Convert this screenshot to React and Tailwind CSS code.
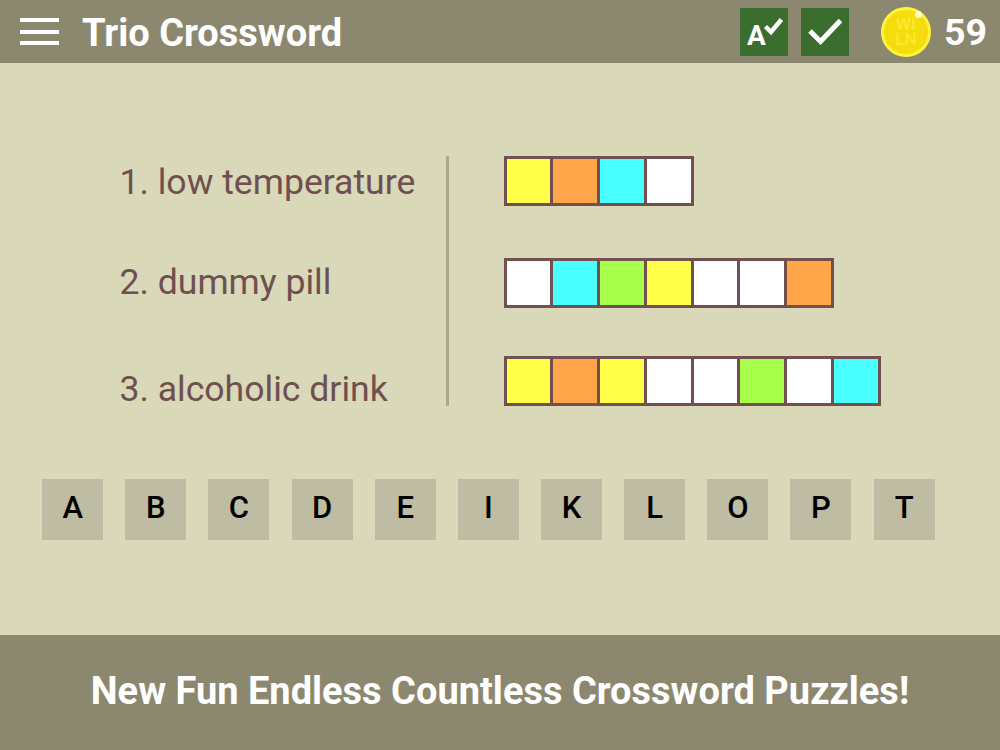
const W = 'bg-white';
const Y = 'bg-[#ffff4a]';
const O = 'bg-[#ffa64a]';
const C = 'bg-[#4affff]';
const G = 'bg-[#a6ff4a]';

const clues = [
    { label: '1. low temperature', className: 'h-[50px]', cells: [Y, O, C, W] },
    { label: '2. dummy pill', className: 'h-[50px] mt-[52px]', cells: [W, C, G, Y, W, W, O] },
    { label: '3. alcoholic drink', className: 'h-[50px] mt-[48px]', cells: [Y, O, Y, W, W, G, W, C] },
];

const letters = ['A', 'B', 'C', 'D', 'E', 'I', 'K', 'L', 'O', 'P', 'T'];

const App = () => {
    return (
        <div className="w-[1000px] h-[750px] flex flex-col overflow-hidden bg-[#d9d8b8] font-['Roboto',sans-serif]">
            {/* Header */}
            <header className="h-[63px] shrink-0 flex items-center bg-[#8c8870] pl-[20px] pr-[13px]">
                <div className="w-[39px] h-[27px] flex flex-col justify-between">
                    <div className="h-[4px] bg-white" />
                    <div className="h-[4px] bg-white" />
                    <div className="h-[4px] bg-white" />
                </div>
                <h1 className="ml-[23px] mt-[2px] text-[38px] font-bold text-white leading-none">Trio Crossword</h1>

                <div className="ml-auto w-[48px] h-[48px] bg-[#3b6e2e] flex items-center justify-center">
                    <svg width="48" height="48" viewBox="0 0 48 48">
                        <text x="7" y="37" fontFamily="Roboto, sans-serif" fontWeight="700" fontSize="28" fill="#fff">A</text>
                        <path d="M25.5 18.5 L31 24 L41.5 11.5" fill="none" stroke="#fff" strokeWidth="4.5" />
                    </svg>
                </div>
                <div className="ml-[13px] w-[48px] h-[48px] bg-[#3b6e2e] flex items-center justify-center">
                    <svg width="48" height="48" viewBox="0 0 48 48">
                        <path d="M9 23 L19.5 33.5 L39.5 12.5" fill="none" stroke="#fff" strokeWidth="5" />
                    </svg>
                </div>
                <div className="relative ml-[32px] w-[50px] h-[50px] rounded-full bg-[#f5dc0c] border-[3px] border-[#fff23a] flex items-center justify-center text-[#fbe92f] text-[17px] font-medium leading-[15px]">
                    <span className="w-[24px] text-center">WI LN</span>
                    <div className="absolute top-[1px] right-[6px] w-[7px] h-[7px] rounded-full bg-[#fffbd0]" />
                </div>
                <span className="ml-[13px] mt-[2px] text-[37.5px] font-bold text-white leading-none">59</span>
            </header>

            {/* Puzzle */}
            <main className="flex-1 flex flex-col">
                <div className="mt-[93px] flex pl-[119.5px]">
                    <div className="w-[326px] text-[35.6px] text-[#6f4f4f] leading-none">
                        <div className="mt-[9px]">{clues[0].label}</div>
                        <div className="mt-[64px]">{clues[1].label}</div>
                        <div className="mt-[72px]">{clues[2].label}</div>
                    </div>
                    <div className="w-[3px] h-[250px] bg-[#aaa98c]" />
                    <div className="ml-[55px]">
                        {clues.map((clue) => (
                            <div key={clue.label} className={`${clue.className} w-fit flex gap-[3px] p-[3px] bg-[#744f4f]`}>
                                {clue.cells.map((cell, i) => (
                                    <div key={i} className={`${cell} w-[43.8px] h-[44px]`} />
                                ))}
                            </div>
                        ))}
                    </div>
                </div>

                <div className="mt-[71px] pl-[42.2px] flex gap-[22.15px]">
                    {letters.map((letter) => (
                        <div key={letter} className="w-[61px] h-[61px] pb-[2px] bg-[#bebca2] flex items-center justify-center text-[31px] font-medium text-black">
                            {letter}
                        </div>
                    ))}
                </div>
            </main>

            {/* Footer */}
            <footer className="h-[115px] pb-[3px] shrink-0 bg-[#8c8870] flex items-center justify-center text-[38px] font-bold text-white">
                New Fun Endless Countless Crossword Puzzles!
            </footer>
        </div>
    );
};

export default App;
